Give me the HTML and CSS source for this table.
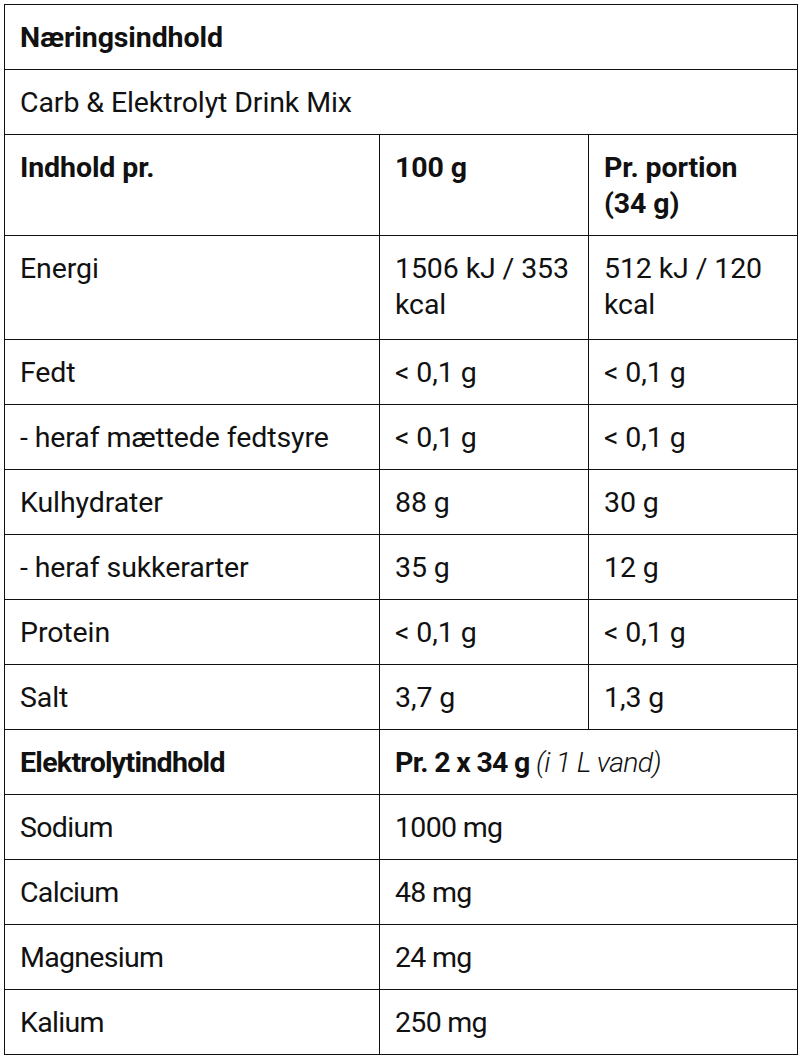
FILE: index.html
```html
<!DOCTYPE html>
<html lang="da">
<head>
<meta charset="utf-8">
<title>Næringsindhold</title>
<link rel="stylesheet" href="styles.css">
</head>
<body>
<div class="wrap">
<table class="nutri">
  <colgroup>
    <col class="c1"><col class="c2"><col class="c3">
  </colgroup>
  <tr><th colspan="3" class="title">Næringsindhold</th></tr>
  <tr><td colspan="3">Carb &amp; Elektrolyt Drink Mix</td></tr>
  <tr><th>Indhold pr.</th><th>100 g</th><th>Pr. portion<br>(34 g)</th></tr>
  <tr class="tall"><td>Energi</td><td>1506 kJ / 353 kcal</td><td>512 kJ / 120 kcal</td></tr>
  <tr><td>Fedt</td><td>&lt; 0,1 g</td><td>&lt; 0,1 g</td></tr>
  <tr><td>- heraf mættede fedtsyre</td><td>&lt; 0,1 g</td><td>&lt; 0,1 g</td></tr>
  <tr><td>Kulhydrater</td><td>88 g</td><td>30 g</td></tr>
  <tr><td>- heraf sukkerarter</td><td>35 g</td><td>12 g</td></tr>
  <tr><td>Protein</td><td>&lt; 0,1 g</td><td>&lt; 0,1 g</td></tr>
  <tr><td>Salt</td><td>3,7 g</td><td>1,3 g</td></tr>
  <tr class="el"><th>Elektrolytindhold</th><th colspan="2">Pr. 2 x 34 g <em>(i 1 L vand)</em></th></tr>
  <tr class="el"><td>Sodium</td><td colspan="2">1000 mg</td></tr>
  <tr class="el"><td>Calcium</td><td colspan="2">48 mg</td></tr>
  <tr class="el"><td>Magnesium</td><td colspan="2">24 mg</td></tr>
  <tr class="el"><td>Kalium</td><td colspan="2">250 mg</td></tr>
</table>
</div>
</body>
</html>
```
FILE: styles.css
```css
html, body {
  margin: 0;
  padding: 0;
  background: #fff;
}
.wrap {
  padding: 4px 3px 4px 4px;
}
.nutri {
  width: 793px;
  border-collapse: collapse;
  table-layout: fixed;
  font-family: Roboto, "Liberation Sans", sans-serif;
  font-size: 28.5px;
  line-height: 36px;
  letter-spacing: -0.1px;
  color: #111;
}
.c1 { width: 375px; }
.c2 { width: 209px; }
.c3 { width: 209px; }
.nutri th, .nutri td {
  border: 1.5px solid #111;
  padding: 15px 12px 13px 15px;
  text-align: left;
  vertical-align: top;
}
.nutri .tall td {
  padding-bottom: 16px;
}
.nutri th {
  font-weight: 700;
}
.nutri td {
  font-weight: 400;
}
.nutri em {
  font-weight: 300;
  font-style: italic;
}
.el th, .el td {
  letter-spacing: -0.7px;
}
```
